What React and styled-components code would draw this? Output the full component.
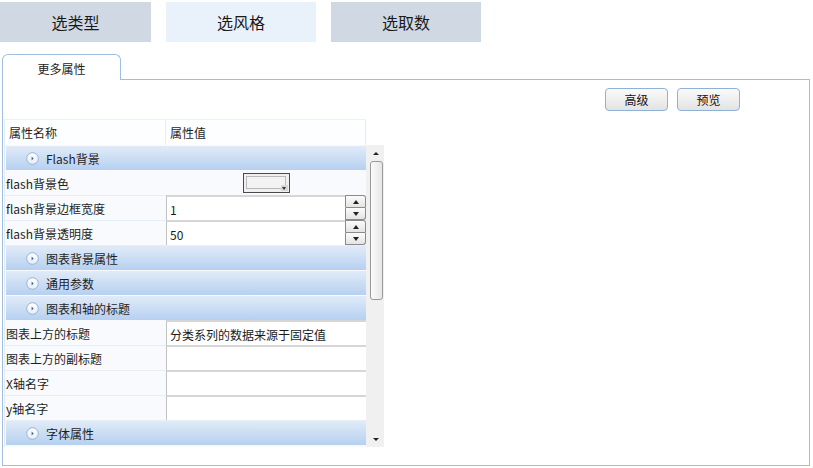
import React from "react";
import styled, { createGlobalStyle } from "styled-components";

const GlobalStyle = createGlobalStyle`
  html, body {
    margin: 0;
    padding: 0;
    background: #ffffff;
  }
  body {
    font-family: "Noto Sans CJK SC", "Noto Sans", sans-serif;
    font-size: 12px;
    color: #1e1e1e;
  }
`;

const rows = [
  { type: "group", label: "Flash背景" },
  { type: "color", label: "flash背景色" },
  { type: "spin", label: "flash背景边框宽度", value: "1" },
  { type: "spin", label: "flash背景透明度", value: "50" },
  { type: "group", label: "图表背景属性" },
  { type: "group", label: "通用参数" },
  { type: "group", label: "图表和轴的标题" },
  { type: "text", label: "图表上方的标题", value: "分类系列的数据来源于固定值" },
  { type: "text", label: "图表上方的副标题", value: "" },
  { type: "text", label: "X轴名字", value: "" },
  { type: "text", label: "y轴名字", value: "" },
  { type: "group", label: "字体属性" },
];

export default function App() {
  return (
    <>
      <GlobalStyle />
      <Page>
        <TopNav>
          <NavTab>选类型</NavTab>
          <NavTab $active>选风格</NavTab>
          <NavTab>选取数</NavTab>
        </TopNav>

        <Panel>
          <TabStrip>
            <PanelTab>更多属性</PanelTab>
            <TabFill />
          </TabStrip>
          <PanelBody>
            <Toolbar>
              <Button>高级</Button>
              <Button>预览</Button>
            </Toolbar>

            <Grid>
              <GridHeader>
                <HeadCell $w={161}>属性名称</HeadCell>
                <HeadCell $w={201}>属性值</HeadCell>
              </GridHeader>
              <GridBody>
                <Rows>
                  {rows.map((r, i) =>
                    r.type === "group" ? (
                      <GroupRow key={i}>
                        <Expander>
                          <svg width="13" height="13" viewBox="0 0 13 13">
                            <defs>
                              <linearGradient id={`eg${i}`} x1="0" y1="0" x2="0" y2="1">
                                <stop offset="0" stopColor="#ffffff" />
                                <stop offset="1" stopColor="#e6eef8" />
                              </linearGradient>
                            </defs>
                            <circle cx="6.5" cy="6.5" r="5.8" fill={`url(#eg${i})`} stroke="#93b3d8" />
                            <path d="M5.6 4.6 L7.6 6.5 L5.6 8.4 Z" fill="#3d5f88" />
                          </svg>
                        </Expander>
                        {r.label}
                      </GroupRow>
                    ) : (
                      <PropRow key={i}>
                        <NameCell>{r.label}</NameCell>
                        {r.type === "color" ? (
                          <PlainValue>
                            <ColorPicker>
                              <Swatch />
                              <PickArrow />
                            </ColorPicker>
                          </PlainValue>
                        ) : (
                          <ValueCell>
                            <ValueText>{r.value}</ValueText>
                            {r.type === "spin" && (
                              <Spinner>
                                <SpinBtn>
                                  <Tri $up />
                                </SpinBtn>
                                <SpinBtn>
                                  <Tri />
                                </SpinBtn>
                              </Spinner>
                            )}
                          </ValueCell>
                        )}
                      </PropRow>
                    )
                  )}
                </Rows>
                <ScrollBar>
                  <ScrollArrow>
                    <Tri $up $small />
                  </ScrollArrow>
                  <Thumb />
                  <TrackRest />
                  <ScrollArrow>
                    <Tri $small />
                  </ScrollArrow>
                </ScrollBar>
              </GridBody>
            </Grid>
          </PanelBody>
        </Panel>
      </Page>
    </>
  );
}

const Page = styled.div`
  width: 813px;
  height: 468px;
  overflow: hidden;
`;

const TopNav = styled.div`
  display: flex;
  gap: 15px;
  padding-top: 2px;
`;

const NavTab = styled.div`
  width: 151px;
  height: 40px;
  display: flex;
  align-items: center;
  justify-content: center;
  font-size: 16px;
  color: #1a1a1a;
  background: ${(p) => (p.$active ? "#e9f1fa" : "#d0d8e4")};
  &:last-child {
    width: 150px;
  }
  &:nth-child(2) {
    width: 150px;
  }
`;

const Panel = styled.div`
  margin: 12px 0 0 2px;
  width: 808px;
`;

const TabStrip = styled.div`
  display: flex;
  height: 26px;
`;

const PanelTab = styled.div`
  width: 119px;
  display: flex;
  align-items: center;
  justify-content: center;
  padding-top: 2px;
  box-sizing: border-box;
  border: 1px solid #9fbfe2;
  border-bottom: none;
  border-radius: 6px 6px 0 0;
  background: #fff;
  color: #222;
`;

const TabFill = styled.div`
  flex: 1;
  border-bottom: 1px solid #9fbfe2;
`;

const PanelBody = styled.div`
  height: 386px;
  box-sizing: border-box;
  border: 1px solid #9fbfe2;
  border-top: none;
  padding: 8px 0 0 1px;
`;

const Toolbar = styled.div`
  display: flex;
  justify-content: flex-end;
  gap: 9px;
  padding-right: 69px;
`;

const Button = styled.div`
  width: 63px;
  height: 23px;
  box-sizing: border-box;
  display: flex;
  align-items: center;
  justify-content: center;
  border: 1px solid #8fb1d6;
  border-radius: 4px;
  background: linear-gradient(#fafafa, #e3e3e3);
  color: #111;
`;

const Grid = styled.div`
  margin-top: 8px;
  width: 380px;
`;

const GridHeader = styled.div`
  display: flex;
  height: 26px;
  width: 362px;
  box-sizing: border-box;
  border-top: 1px solid #edf1f6;
  border-left: 1px solid #e4eaf2;
  border-right: 1px solid #e4eaf2;
  background: #fdfeff;
`;

const HeadCell = styled.div`
  width: ${(p) => p.$w}px;
  box-sizing: border-box;
  display: flex;
  align-items: center;
  padding-left: 4px;
  & + & {
    border-left: 1px solid #e8edf3;
  }
`;

const GridBody = styled.div`
  display: flex;
  gap: 2px;
  height: 302px;
  background: #f0f0f0;
  border-left: 1px solid #e4eaf2;
`;

const Rows = styled.div`
  width: 361px;
  display: flex;
  flex-direction: column;
  gap: 1px;
  background: #f7f9fc;
  padding-top: 1px;
  height: 301px;
`;

const GroupRow = styled.div`
  height: 24px;
  margin-left: 1px;
  display: flex;
  align-items: center;
  padding-left: 20px;
  gap: 7px;
  background: linear-gradient(#e1ebf8, #b6d0f0);
  color: #1e1e1e;
`;

const Expander = styled.span`
  display: flex;
  width: 13px;
  height: 13px;
`;

const PropRow = styled.div`
  height: 24px;
  display: flex;
  background: #f8fafd;
  box-shadow: 0 1px 0 #e8eef5;
`;

const NameCell = styled.div`
  width: 160px;
  display: flex;
  align-items: center;
  padding-left: 1px;
  white-space: nowrap;
`;

const PlainValue = styled.div`
  flex: 1;
  display: flex;
  align-items: center;
  padding-left: 77px;
`;

const ColorPicker = styled.div`
  position: relative;
  width: 47px;
  height: 20px;
  box-sizing: border-box;
  border: 1px solid #4a4a4a;
  background: #f0f0f0;
  padding: 2px 3px 3px 2px;
`;

const Swatch = styled.div`
  height: 100%;
  box-sizing: border-box;
  border: 1px solid #b9b9b9;
  background: #f3f3f3;
`;

const PickArrow = styled.div`
  position: absolute;
  right: 1px;
  bottom: 1px;
  width: 7px;
  height: 6px;
  background: #d8d8d8;
  &::after {
    content: "";
    position: absolute;
    left: 1px;
    top: 2px;
    border-left: 2.5px solid transparent;
    border-right: 2.5px solid transparent;
    border-top: 3px solid #333;
  }
`;

const ValueCell = styled.div`
  flex: 1;
  display: flex;
  align-items: stretch;
  background: #ffffff;
  border-top: 2px solid #d6d6d6;
  border-left: 1px solid #c2c2c2;
  margin-top: -1px;
`;

const ValueText = styled.div`
  flex: 1;
  display: flex;
  align-items: center;
  padding-left: 3px;
  padding-top: 2px;
  color: #1a1a1a;
  white-space: nowrap;
`;

const Spinner = styled.div`
  width: 21px;
  display: flex;
  flex-direction: column;
  margin-top: -2px;
`;

const SpinBtn = styled.div`
  flex: 1;
  display: flex;
  align-items: center;
  justify-content: center;
  box-sizing: border-box;
  border: 1px solid #8a8a8a;
  border-radius: 0 3px 0 0;
  background: linear-gradient(#fbfbfb, #e4e4e4);
  & + & {
    border-top: none;
    border-radius: 0 0 3px 0;
  }
`;

const Tri = styled.span`
  width: 0;
  height: 0;
  border-left: ${(p) => (p.$small ? 3 : 3.5)}px solid transparent;
  border-right: ${(p) => (p.$small ? 3 : 3.5)}px solid transparent;
  ${(p) =>
    p.$up
      ? `border-bottom: ${p.$small ? 3 : 4}px solid #222;`
      : `border-top: ${p.$small ? 3 : 4}px solid #222;`}
`;

const ScrollBar = styled.div`
  width: 16px;
  display: flex;
  flex-direction: column;
  align-items: center;
`;

const ScrollArrow = styled.div`
  height: 16px;
  width: 16px;
  display: flex;
  align-items: center;
  justify-content: center;
`;

const Thumb = styled.div`
  width: 13px;
  height: 139px;
  box-sizing: border-box;
  border: 1px solid #9a9a9a;
  border-radius: 3px;
  background: linear-gradient(90deg, #fafafa, #e6e6e6);
`;

const TrackRest = styled.div`
  flex: 1;
`;
